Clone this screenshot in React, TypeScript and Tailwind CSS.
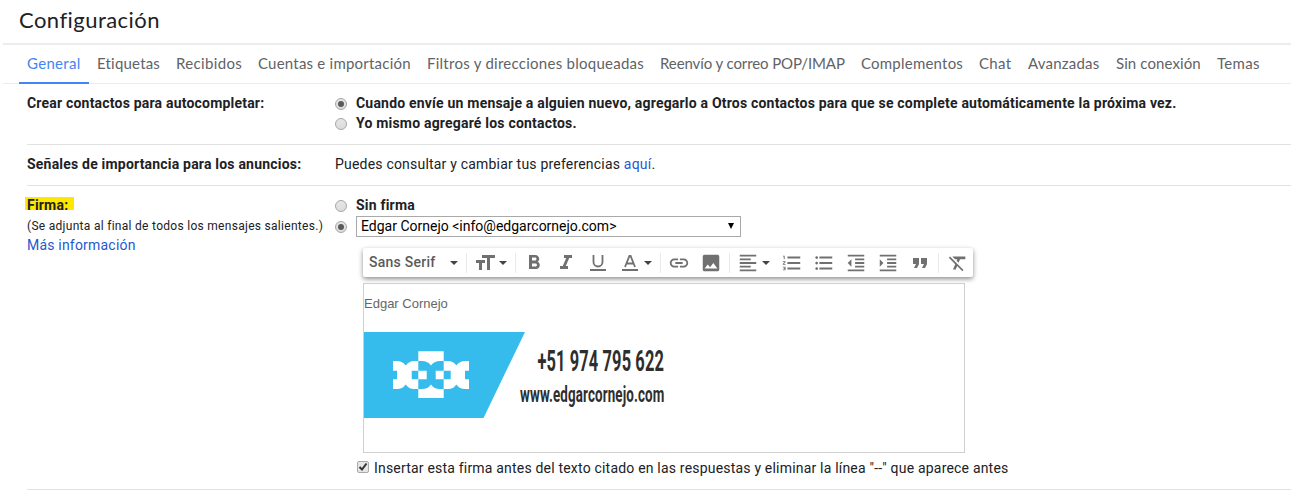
import React from "react";
import {
  MdFormatSize, MdFormatBold, MdFormatItalic, MdLink, MdImage, MdFormatAlignLeft,
  MdFormatListNumbered, MdFormatListBulleted, MdFormatIndentDecrease,
  MdFormatIndentIncrease, MdFormatQuote, MdFormatClear,
} from "react-icons/md";

const tabs = [
  { label: "Etiquetas", box: "w-[79px]", text: "tracking-[0.2px]" },
  { label: "Recibidos", box: "w-[82px]", text: "tracking-[0.35px]" },
  { label: "Cuentas e importación", box: "w-[169px]", text: "tracking-[0.22px]" },
  { label: "Filtros y direcciones bloqueadas", box: "w-[233px]", text: "tracking-[0.26px]" },
  { label: "Reenvío y correo POP/IMAP", box: "w-[201px]", text: "tracking-[-0.1px]" },
  { label: "Complementos", box: "w-[118px]", text: "tracking-[0.22px]" },
  { label: "Chat", box: "w-[49px]", text: "tracking-[0.3px]" },
  { label: "Avanzadas", box: "w-[88px]", text: "tracking-[0.2px]" },
  { label: "Sin conexión", box: "w-[101px]", text: "tracking-[0.1px]" },
  { label: "Temas", box: "w-[60px]", text: "tracking-[0.3px]" },
];

function Radio({ on = false }: { on?: boolean }) {
  return (
    <span className="mt-[2px] flex size-3 shrink-0 items-center justify-center rounded-full border border-[#a6a6a6] bg-linear-to-b from-[#e6e6e6] to-[#dcdcdc]">
      {on && <span className="size-1.5 rounded-full bg-[#5a5a5a]" />}
    </span>
  );
}

function Caret({ className = "" }: { className?: string }) {
  return (
    <svg viewBox="0 0 8 4" className={"h-1 w-2 shrink-0 " + className}>
      <path d="M0 0h8L4 4z" fill="#444" />
    </svg>
  );
}

function Divider({ className = "" }: { className?: string }) {
  return <span className={"h-5 w-px shrink-0 bg-[#e8eaed] " + className} />;
}

function Toolbar() {
  return (
    <div className="ml-[363px] flex h-[29px] w-[610px] items-center rounded-[2px] bg-white text-[#707070] shadow-[0_2px_5px_rgba(0,0,0,0.45)]">
      <span className="-mt-[2px] ml-[6px] w-[81px] shrink-0 whitespace-nowrap text-[14px] font-medium tracking-[0.25px] text-[#5a5a5a]">Sans Serif</span>
      <Caret />
      <Divider className="ml-2" />
      <MdFormatSize className="ml-[6px] size-6 shrink-0" />
      <Caret className="ml-[2px]" />
      <Divider className="ml-2" />
      <MdFormatBold className="ml-[6px] size-6 shrink-0" />
      <MdFormatItalic className="ml-2 size-6 shrink-0" />
      <svg viewBox="0 0 16 16" className="ml-3 size-4 shrink-0" fill="none" stroke="currentColor">
        <path d="M3.500 0v7a4.500 4.500 0 0 0 9 0V0" strokeWidth="1.800" />
        <path d="M0 15h16" strokeWidth="2" />
      </svg>
      <svg viewBox="0 0 16 16" className="ml-4 size-4 shrink-0" fill="none" stroke="currentColor">
        <path d="M3 12 7.400 1h1.200L13 12M4.500 8.500h7" strokeWidth="1.800" />
        <path d="M0 15h16" strokeWidth="2" />
      </svg>
      <Caret className="ml-[6px]" />
      <Divider className="ml-2" />
      <MdLink className="ml-[7px] size-[22px] shrink-0" />
      <MdImage className="ml-[10px] size-[22px] shrink-0" />
      <Divider className="ml-[7px]" />
      <MdFormatAlignLeft className="ml-[7px] size-[22px] shrink-0" />
      <Caret className="ml-[3px]" />
      <MdFormatListNumbered className="ml-[11px] size-[22px] shrink-0" />
      <MdFormatListBulleted className="ml-[10px] size-[22px] shrink-0" />
      <MdFormatIndentDecrease className="ml-[10px] size-[22px] shrink-0" />
      <MdFormatIndentIncrease className="ml-[10px] size-[22px] shrink-0" />
      <MdFormatQuote className="ml-[9px] size-6 shrink-0" />
      <Divider className="ml-[6px]" />
      <MdFormatClear className="ml-[8px] size-[22px] shrink-0" />
    </div>
  );
}

function SignatureCard() {
  return (
    <svg viewBox="0 0 320 86" className="mt-[18px] block h-[86px] w-[320px] overflow-visible">
      <path d="M0 0H161L119.500 86H0z" fill="#36bcec" />
      <path
        fill="#fff"
        fillRule="evenodd"
        d="M54.300 19.300h25.400V66H54.300z M29 29h4q5.500 0 8.700 4.500Q45 29 50 29h8q6 0 9 4.500Q70 29 76 29h8q5.500 0 8.300 4.500Q95.500 29 101 29h4v9.700h-4v8.600h4V57h-4q-5.500 0-8.700-4.500Q89.500 57 84 57h-8q-6 0-9-4.500Q64 57 58 57h-8q-5 0-8.300-4.500Q38.500 57 33 57h-4v-9.700h4v-8.600h-4z M47.700 38.700v8.600h15v-8.600z M71.700 38.700v8.600h15v-8.600z"
      />
      <g fill="#2e2e2e" fontFamily="Roboto, sans-serif" fontWeight="700">
        <text transform="translate(173.500 39) scale(.58 1)" fontSize="29" textLength="218" lengthAdjust="spacingAndGlyphs">+51 974 795 622</text>
        <text transform="translate(156 70) scale(.58 1)" fontSize="21.500" textLength="249" lengthAdjust="spacingAndGlyphs">www.edgarcornejo.com</text>
      </g>
    </svg>
  );
}

export default function App() {
  return (
    <main className="h-[490px] w-[1291px] overflow-hidden bg-white font-[Roboto,sans-serif] text-[14px] leading-5 tracking-[0.2px] text-[#202124]">
      <h1 className="h-[43px] pl-[19px] pt-[6px] font-[Lato,sans-serif] text-[22px] leading-7 tracking-[0.45px]">Configuración</h1>
      <nav className="ml-[3px] flex h-[41px] border-b border-[#ececec] pl-4 font-[Lato,sans-serif] text-[15px] leading-[41px] text-[#5f6368] shadow-[inset_0_2px_0_#ececec]">
        <span className="mr-2 h-[41px] w-[70px] border-b-2 border-[#4285f4] pl-2 tracking-[0.3px] text-[#4285f4]">General</span>
        {tabs.map((t) => (
          <span key={t.label} className={"shrink-0 whitespace-nowrap " + t.box}><span className={t.text}>{t.label}</span></span>
        ))}
      </nav>
      <section className="ml-[27px] flex h-[61px] border-b border-[#e2e2e2] pt-[9px] font-bold">
        <div className="w-[308px]">Crear contactos para autocompletar:</div>
        <div>
          <div className="flex items-center gap-[9px]"><Radio on /><span>Cuando envíe un mensaje a alguien nuevo, agregarlo a Otros contactos para que se complete automáticamente la próxima vez.</span></div>
          <div className="flex items-center gap-[9px]"><Radio /><span>Yo mismo agregaré los contactos.</span></div>
        </div>
      </section>
      <section className="ml-[27px] flex h-[41px] border-b border-[#e2e2e2] pt-[9px]">
        <b className="w-[308px]">Señales de importancia para los anuncios:</b>
        <span>Puedes consultar y cambiar tus preferencias <a className="text-[#1f58cf]">aquí</a>.</span>
      </section>
      <section className="ml-[27px] h-[304px] border-b border-[#e2e2e2] pt-[9px]">
        <div className="flex h-[53px]">
          <div className="w-[308px] whitespace-nowrap">
            <div className="flex h-5 pt-[2px]"><b className="-ml-[2px] h-[13px] w-[49px] bg-[#ffe800] pl-[2px] leading-4">Firma:</b></div>
            <div className="pt-px text-[12px] leading-5 tracking-[0.29px]">(Se adjunta al final de todos los mensajes salientes.)</div>
            <a className="block leading-[18px] text-[#1f58cf]">Más información</a>
          </div>
          <div>
            <div className="flex items-center gap-[9px]"><Radio /><b>Sin firma</b></div>
            <div className="flex items-center gap-[9px]"><Radio on />
              <div className="mt-px flex h-[21px] w-[385px] items-center justify-between border border-[#a9a9a9] pl-1 pr-1.5 text-black">
                <span className="-mt-[2px] tracking-normal">Edgar Cornejo &lt;info@edgarcornejo.com&gt;</span>
                <svg viewBox="0 0 6 6" className="-mt-px size-1.5"><path d="M0 0h6L3 6z" /></svg>
              </div>
            </div>
          </div>
        </div>
        <div className="-ml-[27px]">
          <Toolbar />
          <div className="ml-[363px] mt-[6px] h-[170px] w-[602px] border border-[#d0d0d0] pt-[10px]">
            <div className="font-['Liberation_Sans',sans-serif] text-[13px] tracking-normal text-[#666]">Edgar Cornejo</div>
            <SignatureCard />
          </div>
          <label className="ml-[357px] mt-[5px] flex items-center gap-[5px]">
            <svg viewBox="0 0 12 12" className="-mt-[3px] size-3"><rect x=".5" y=".5" width="11" height="11" rx="1.500" fill="#e6e6e6" stroke="#aaa" /><path d="M2.500 6 5 8.500 9.500 2.500" fill="none" stroke="#333" strokeWidth="2" /></svg>
            <span className="tracking-[0.195px]">Insertar esta firma antes del texto citado en las respuestas y eliminar la línea "--" que aparece antes</span>
          </label>
        </div>
      </section>
    </main>
  );
}
